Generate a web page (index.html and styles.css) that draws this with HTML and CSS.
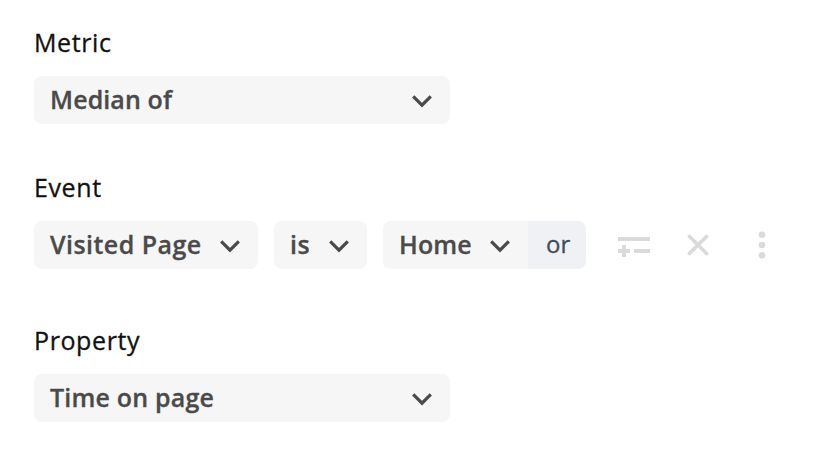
FILE: index.html
```html
<!DOCTYPE html>
<html lang="en">
<head>
<meta charset="utf-8">
<title>Metric</title>
<link rel="stylesheet" href="styles.css">
</head>
<body>
<main class="form">
  <section class="field">
    <div class="label"><span class="t-metric">Metric</span></div>
    <div class="select wide"><span class="t-median">Median of</span><svg class="chev" viewBox="0 0 20 14"><path d="M1.2 1.4 10 10.2l8.8-8.8"/></svg></div>
  </section>
  <section class="field event">
    <div class="label"><span class="t-event">Event</span></div>
    <div class="row">
      <div class="select visited"><span class="t-visited">Visited Page</span><svg class="chev" viewBox="0 0 20 14"><path d="M1.2 1.4 10 10.2l8.8-8.8"/></svg></div>
      <div class="select is"><span class="t-is">is</span><svg class="chev" viewBox="0 0 20 14"><path d="M1.2 1.4 10 10.2l8.8-8.8"/></svg></div>
      <div class="group">
        <div class="select home"><span class="t-home">Home</span><svg class="chev" viewBox="0 0 20 14"><path d="M1.2 1.4 10 10.2l8.8-8.8"/></svg></div>
        <div class="or"><span class="t-or">or</span></div>
      </div>
      <svg class="icon filter" viewBox="0 0 32 20"><path d="M0 2h32M0 14h12M6 8v12M16 14h16"/></svg>
      <svg class="icon close" viewBox="0 0 22 22"><path d="M2.4 2.4l17.2 17.2M19.6 2.4 2.4 19.6"/></svg>
      <svg class="icon more" viewBox="0 0 8 28"><circle cx="4" cy="3.7" r="3.3"/><circle cx="4" cy="14" r="3.3"/><circle cx="4" cy="24.3" r="3.3"/></svg>
    </div>
  </section>
  <section class="field property">
    <div class="label"><span class="t-property">Property</span></div>
    <div class="select wide"><span class="t-time">Time on page</span><svg class="chev" viewBox="0 0 20 14"><path d="M1.2 1.4 10 10.2l8.8-8.8"/></svg></div>
  </section>
</main>
</body>
</html>
```
FILE: styles.css
```css
* { box-sizing: border-box; }
body { margin: 0; background: #fff; font-family: "Open Sans", "Noto Sans", sans-serif; }
.form { padding: 25px 34px; }
.label { height: 34px; line-height: 34px; font-size: 25px; letter-spacing: .6px; color: #111; margin-bottom: 17px; -webkit-text-stroke: .3px #111; }
.event { margin-top: 46px; }
.property { margin-top: 54px; }
.select { display: flex; align-items: center; justify-content: space-between; height: 48px; padding: 0 18px 2px 16px; background: #f6f6f6; border-radius: 8px; font-size: 25px; font-weight: 600; letter-spacing: .1px; color: #4a4a4a; white-space: nowrap; -webkit-text-stroke: .3px #4a4a4a; }
.wide { width: 416px; }
.row { display: flex; align-items: center; }
.visited { width: 224px; margin-right: 16px; }
.is { width: 93px; margin-right: 16px; }
.t-visited, .t-is { letter-spacing: .45px; }
.t-time { letter-spacing: .2px; }
.group { display: flex; border-radius: 8px; overflow: hidden; width: 203px; margin-right: 32px; }
.home { width: 145px; border-radius: 0; }
.or { width: 58px; height: 48px; line-height: 46px; padding-left: 18px; background: #eff1f4; color: #3e4c5a; font-size: 24px; -webkit-text-stroke: .3px #3e4c5a; }
.chev { width: 20px; height: 14px; margin-top: 6px; fill: none; stroke: #4a4a4a; stroke-width: 3.2; }
.icon { fill: none; stroke: #dadada; stroke-width: 4; flex: none; }
.filter { width: 32px; height: 20px; margin-top: 4px; margin-right: 37px; }
.close { width: 22px; height: 22px; margin-right: 49.4px; stroke-width: 3.6; stroke-linecap: round; }
.more { width: 8px; height: 28px; }
.more circle { fill: #dadada; stroke: none; }
```
